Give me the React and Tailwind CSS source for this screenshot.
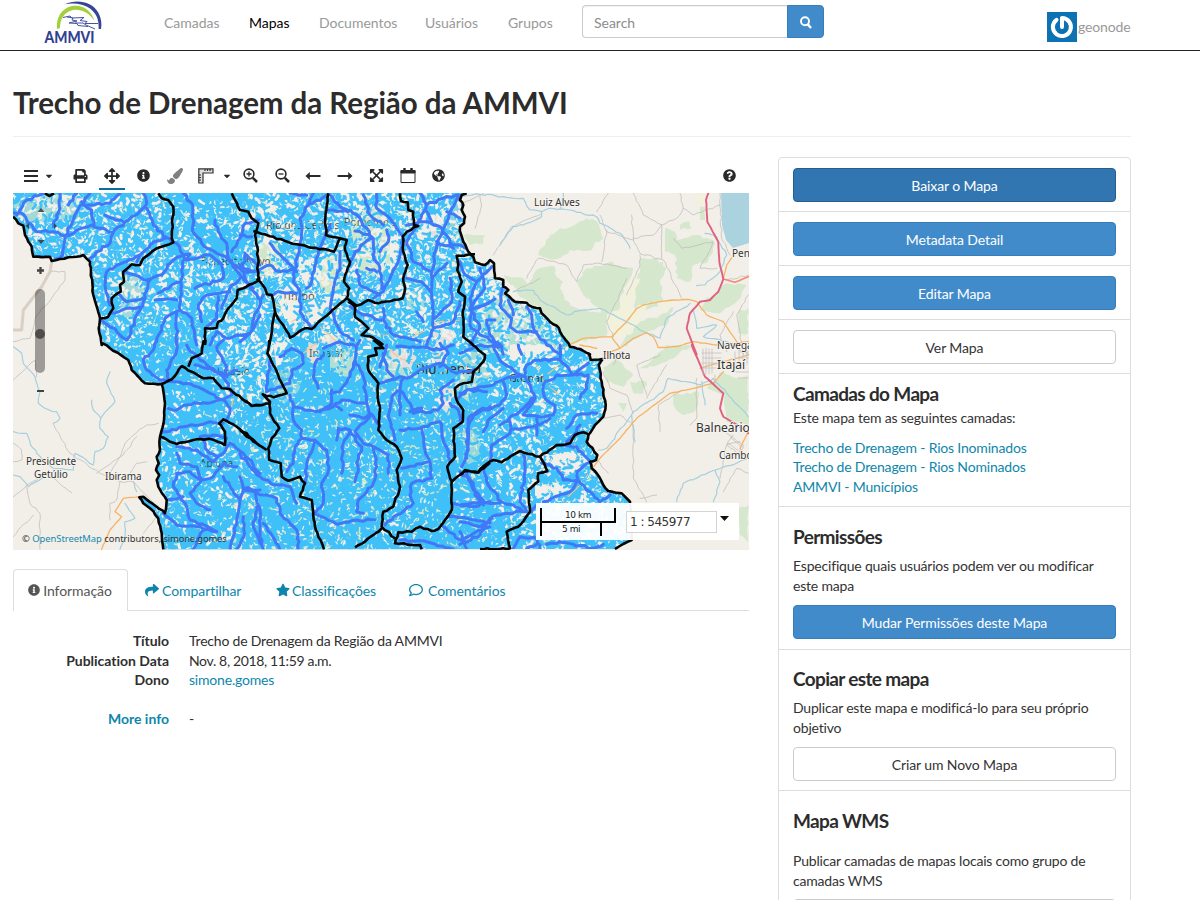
import React from "react";
import {
  FaPrint, FaArrowsAlt, FaInfoCircle, FaPaintBrush, FaQuestionCircle, FaGlobeAmericas,
  FaShare, FaStar, FaRegComment, FaCaretDown, FaExpandArrowsAlt,
} from "react-icons/fa";

const LATO = "font-['Lato','Open_Sans',sans-serif]";

/* Map tiles: every tile has an origin and holds lines drawn at three times the map scale. */
const TILES = { A: [10, 155], B: [240, 155], C: [10, 340], D: [240, 340], E: [460, 155], F: [460, 345] };
const pts = (tile, s) =>
  s.trim().split(/\s+/).map((p) => {
    const [x, y] = p.split(",").map(Number);
    return [TILES[tile][0] + x / 3, TILES[tile][1] + y / 3];
  });
const toPath = (list) => list.map(([x, y], i) => `${i ? "L" : "M"}${x.toFixed(1)} ${y.toFixed(1)}`).join("");

function makeRandom(seed) {
  let a = seed;
  return () => {
    a = (a + 0x6d2b79f5) | 0;
    let t = Math.imul(a ^ (a >>> 15), 1 | a);
    t = (t + Math.imul(t ^ (t >>> 7), 61 | t)) ^ t;
    return ((t ^ (t >>> 14)) >>> 0) / 4294967296;
  };
}

/* Adds small wiggles so that long segments read as surveyed lines. */
function roughPath(list, amp, seed) {
  const rnd = makeRandom(seed);
  const out = [list[0]];
  for (let i = 1; i < list.length; i++) {
    const [x0, y0] = list[i - 1];
    const [x1, y1] = list[i];
    const n = Math.max(1, Math.round(Math.hypot(x1 - x0, y1 - y0) / 4));
    for (let k = 1; k < n; k++) {
      out.push([x0 + ((x1 - x0) * k) / n + (rnd() - 0.5) * amp, y0 + ((y1 - y0) * k) / n + (rnd() - 0.5) * amp]);
    }
    out.push([x1, y1]);
  }
  return toPath(out);
}

const WEST = [
  ["A", "9,185 25,205 40,212 45,240 55,260 65,275 70,305 120,305 125,318 150,312 200,305 220,300 240,320 243,350 250,420 262,460 270,490 266,520 275,570"],
  ["C", "278,10 300,25 355,60 365,90 380,105 405,130 455,132 465,190 462,240 450,290 450,330 440,350 446,370 438,390 448,405 440,420 445,440 470,480 465,520 440,500 400,470 388,472 400,490 420,505 445,535 455,580 460,628"],
];
const EAST = [
  ["E", "20,115 5,120 0,135 10,150 5,165 15,185 12,205 0,215 2,235 10,260 25,290 40,305 45,322 75,330 90,315 102,325 105,370 130,375 130,395 145,405 135,415 165,440 200,443 215,455 240,460 245,475 270,500 290,512 300,530 312,548 330,575 360,582 390,598"],
  ["F", "385,25 392,45 428,42 416,60 425,110 437,180 430,215 405,240 385,270 380,290 412,330 408,345 390,350 395,370 410,385 425,410 445,438 485,445 510,470 515,585 490,597 465,612"],
];
const join = (segs) => segs.flatMap(([t, s]) => pts(t, s));
const REGION = toPath([[13, 192], ...join(WEST), ...join(EAST).slice().reverse(), [466, 192]]) + "Z";

const BORDERS = [
  ["A", "445,115 455,130 475,135 490,155 485,250 490,262 440,280 400,310 390,330 365,328 340,350 342,380 330,390 332,410 305,430 310,460 295,485 270,490"],
  ["A", "665,115 675,135 690,165 715,170 725,190 745,205 735,240 745,310 742,340 748,375 700,400 683,405 680,430 655,460 640,490 625,500 620,518 585,520 585,570"],
  ["A", "105,115 118,123 132,115"],
  ["C", "582,0 575,40 545,55 535,80"],
  ["B", "50,370 75,400 80,418 95,420 105,470 150,548 195,520 215,522 320,430 328,400 312,380 320,350 330,320 315,285 320,255 300,250 258,240 256,190 265,115"],
  ["B", "40,228 170,268 282,290 300,250"],
  ["B", "480,115 483,138 503,142 505,165 520,170 522,210 535,213 500,230 488,245 490,290 503,330 490,370 495,400 488,430 415,445 385,435 350,452 320,430"],
  ["B", "325,440 345,455 345,485 385,520 365,540 400,548 430,570"],
  ["B", "105,470 88,570"],
  ["D", "88,0 82,40 140,160 102,172 68,163 90,185 90,220 118,265 95,295 85,325 88,360 122,370 125,410 145,422 180,410 195,430 180,470 215,480 225,560 235,590 252,628"],
  ["B", "705,298 650,302 655,330 652,345 665,380 655,410 675,425 668,480 670,545 700,570"],
  ["D", "680,0 735,45 730,65 700,95 695,125 670,130 645,145 650,180 670,210 668,245 640,265 645,350 622,380 635,425 635,510 615,540 595,567 575,573 540,560 515,575 475,577 465,610 540,615 545,628"],
  ["D", "400,0 430,25 405,25 410,45 385,50 385,90 415,130 413,160 420,210 415,270 440,300 470,320 485,355 470,390 480,440 460,500 430,515 425,560 465,595"],
  ["D", "425,565 375,605 345,622"],
  ["D", "0,170 35,198 90,190"],
  ["D", "0,270 20,290 50,310 80,330"],
  ["C", "455,132 485,118 515,78 580,115 610,115 635,145 660,148 725,198 750,195"],
  ["C", "450,290 500,312 550,300 605,298 645,315 645,275 628,250 640,238 680,260 710,280 750,318"],
  ["D", "635,425 675,390 715,398 750,368"],
  ["F", "0,388 15,378 55,382 75,360 100,345 125,352 150,335 180,318 240,335 290,300 330,295 345,270 370,262 388,272"],
  ["F", "240,335 262,378 235,385 235,410 205,435 210,500 175,545 140,560 150,610 60,612"],
];

const RIVERS = [
  ["A", "9,172 40,178 80,230 130,230 165,243 245,210 310,232 345,200 400,160 410,145 400,115"],
  ["A", "20,180 50,135 100,115"], ["A", "165,243 158,300 135,312"], ["A", "150,115 150,160 130,215"],
  ["A", "200,115 175,150"], ["A", "165,243 200,170 225,130 240,115"], ["A", "215,140 245,165 252,210"],
  ["A", "285,180 310,190 340,200"], ["A", "310,232 300,265 260,290 240,310"], ["A", "220,150 300,145 330,115"],
  ["A", "410,160 430,210 470,248 500,265 520,300 540,298"], ["A", "470,248 430,262 390,300 350,320 290,350 285,390 300,450"],
  ["A", "520,300 490,315 455,360 410,375 345,350"], ["A", "520,115 548,150 548,230 575,265 620,295 660,315 690,360 745,430"],
  ["A", "615,195 625,230 650,265 655,310"], ["A", "745,195 705,205 690,250 665,290"], ["A", "540,298 530,315 600,300 635,330 640,370 555,400"],
  ["A", "522,300 515,370 510,465 465,490 440,560"], ["A", "510,465 545,490 560,570"], ["A", "510,380 445,415"],
  ["A", "500,435 435,435"], ["A", "420,375 400,440 350,555 275,495"], ["A", "395,455 350,460 300,475"],
  ["A", "330,420 350,440 400,430"], ["A", "690,370 660,400 635,460"], ["A", "660,410 590,420 565,450 575,500"],
  ["A", "625,425 620,490 590,515"], ["A", "750,480 720,535 650,550 620,530 600,570"], ["A", "500,470 500,570"],
  ["A", "745,350 700,350 650,310"], ["A", "705,295 700,340"], ["A", "390,300 380,320"],
  ["B", "0,340 40,350 90,330 120,350 165,345 185,230 180,190 205,150 220,115"], ["B", "205,150 260,120"],
  ["B", "165,345 160,380 180,410 180,470 215,520"], ["B", "90,265 130,310 170,350"], ["B", "270,210 235,290 215,380 200,400"],
  ["B", "270,120 310,160 350,180 400,250 400,300 420,340 425,400"], ["B", "265,165 325,170"], ["B", "370,120 390,180 430,210"],
  ["B", "345,228 395,245"], ["B", "395,250 345,290 330,330"], ["B", "440,225 445,260 420,290"], ["B", "490,250 470,330 430,410 400,430"],
  ["B", "350,345 360,390 420,420"], ["B", "380,340 410,350"], ["B", "410,115 410,160 450,190 485,240"],
  ["B", "300,290 300,330 280,400 270,460 300,530 340,555"], ["B", "70,420 50,470 30,535 0,560"], ["B", "90,420 120,410 170,415"],
  ["B", "540,115 560,150 610,130 650,120"], ["B", "560,150 530,210 500,260 520,320 575,350 575,420 580,520 560,570"],
  ["B", "655,120 620,200 590,270 575,350"], ["B", "500,210 560,200 600,215 640,270 700,280"], ["B", "620,170 660,190"],
  ["B", "590,260 640,280"], ["B", "500,370 545,380 572,410"], ["B", "620,325 575,370"], ["B", "630,370 635,440 585,490"],
  ["B", "330,455 370,480 430,495 460,540 540,560"], ["B", "430,460 430,495"], ["B", "530,470 550,500"], ["B", "580,520 640,500 660,440"],
  ["B", "720,340 735,400 690,460 720,520 690,570"], ["B", "750,440 690,465"], ["B", "0,240 35,245"], ["B", "0,330 20,380 40,400"],
  ["B", "560,170 575,200"], ["B", "20,300 60,330"], ["B", "150,115 200,120"],
  ["C", "440,0 430,30 400,60 410,90 450,120 530,130 600,160 640,180 665,165 640,100 555,75"], ["C", "500,0 500,30 470,90 475,120"],
  ["C", "530,15 570,60 640,110 680,90"], ["C", "475,205 500,210 530,195 640,180 660,205 650,240"], ["C", "450,280 520,260 600,245 640,250"],
  ["C", "640,0 620,20 650,80 650,110"], ["C", "500,320 560,330 610,365 640,340 660,310 700,340 750,400"], ["C", "570,290 610,285 650,295"],
  ["C", "500,340 510,370 560,380 575,420 540,460 560,490 600,510"], ["C", "575,420 610,410 640,370 680,380"],
  ["C", "500,400 490,440 510,470 530,500 540,540 620,575"], ["C", "500,400 540,395 575,420"], ["C", "460,520 500,555 560,560 620,575"],
  ["C", "475,480 520,470"], ["C", "640,410 660,440 690,480 680,540 660,628"], ["C", "750,450 700,445 690,480"],
  ["C", "700,530 700,590 680,628"], ["C", "580,570 560,610 550,628"], ["C", "580,300 590,330 620,350"], ["C", "740,500 730,560 750,610"],
  ["D", "0,340 30,380 60,410 105,435 150,440 170,490"], ["D", "0,410 10,450 70,465 110,475 120,520 170,570 175,628"],
  ["D", "40,450 60,510 60,580 70,628"], ["D", "70,550 105,600 120,628"], ["D", "120,50 155,25 185,40 190,70 155,90 150,130 80,155 90,60"],
  ["D", "250,45 225,70 220,110 235,145"], ["D", "150,165 160,200 230,215 280,200 305,180 380,190"], ["D", "345,60 330,110 300,155 275,160"],
  ["D", "275,150 275,190 240,215"], ["D", "345,60 370,110 380,190 390,230 345,275 370,310 400,320 445,345"],
  ["D", "160,200 160,240 185,270 185,295 165,320 160,370 140,395"], ["D", "185,295 225,300 260,330 265,395 245,430 250,490 225,520"],
  ["D", "225,300 200,370 195,430"], ["D", "290,300 295,265 330,270 310,310 305,400"], ["D", "330,270 365,320 350,370 355,395 345,425"],
  ["D", "400,320 410,380 400,430 355,480 350,515 370,520"], ["D", "220,520 290,553 350,540 405,540"], ["D", "445,345 445,400"],
  ["D", "330,225 370,235 390,220 420,260"], ["D", "305,210 290,200"], ["D", "250,25 300,5 350,20 360,0"], ["D", "345,60 350,20"],
  ["D", "420,130 480,110 500,115 540,90 600,70 650,100 700,90"], ["D", "430,40 440,90 460,110"], ["D", "440,15 420,80"],
  ["D", "490,115 480,150 510,190 520,220 595,210 610,190 600,150 640,120"], ["D", "480,150 455,170 445,230 465,300"],
  ["D", "480,270 540,265 600,245 610,300 630,360"], ["D", "545,265 555,330 570,365 485,385"], ["D", "570,365 570,400 575,415 515,430 510,465 520,490 435,555"],
  ["D", "480,160 480,225"], ["D", "510,215 545,205"], ["D", "630,190 655,210 660,240"], ["D", "750,200 710,215 685,260 685,330 665,380"],
  ["D", "655,175 680,150 740,155"], ["D", "640,490 700,500 750,485"], ["D", "680,400 700,450 730,480"], ["D", "630,530 680,535 750,550"],
  ["D", "610,560 660,600 750,560"], ["D", "480,600 560,605 640,628"], ["D", "470,20 520,20 600,30 640,15"], ["D", "600,80 625,40 600,10"],
  ["E", "0,320 15,360 50,380 95,335"], ["E", "50,380 30,430 35,470 30,510 60,540 120,570"], ["E", "35,465 105,432"], ["E", "125,400 120,450 155,490 150,515 170,530 230,530"],
  ["E", "200,455 215,480 225,530 260,570 300,598"], ["E", "80,495 90,540 125,575 130,598"], ["E", "145,435 160,480"], ["E", "80,495 105,495"], ["E", "0,595 60,570 125,575"], ["E", "175,570 185,598"],
  ["F", "100,0 130,55 190,95 200,60 230,45 300,45 300,0"], ["F", "300,45 340,90 385,55"], ["F", "195,95 210,120 225,160 190,210 240,215 280,210 285,180 255,160 250,120 290,90 340,90"],
  ["F", "0,145 60,125 100,120 150,95 195,95"], ["F", "130,110 140,150 120,180 60,200 25,220 20,340"], ["F", "120,240 190,190 225,155"],
  ["F", "320,250 350,210 410,205"], ["F", "90,345 95,300 150,265 150,230"], ["F", "70,370 80,410 125,470 200,500"], ["F", "190,330 195,380 180,470 200,500"],
  ["F", "0,480 60,470 120,475"], ["F", "0,380 40,415 45,450 70,480"], ["F", "150,255 220,245 270,220"], ["F", "230,215 230,270"],
  ["F", "245,355 290,370 310,405 355,405 390,440 420,470 450,450"], ["F", "300,300 350,305 390,350 350,380 355,405 330,440 250,470"],
  ["F", "0,530 60,545 110,510 190,500"], ["F", "160,610 180,575 230,580 240,610"], ["F", "215,500 230,480"], ["F", "0,598 60,570 90,520"],
  ["F", "350,90 385,90 380,130 360,160"], ["F", "260,598 300,590 400,610 430,598"], ["F", "0,560 20,612"], ["F", "70,260 90,220 130,190"], ["F", "360,240 340,270 320,290"], ["F", "230,598 200,612"],
];

const STREAMS = [
  ["C", "10,20 35,40 40,70 75,110 90,155 85,190 105,205 140,215 150,235 130,250"], ["C", "245,180 250,210 272,235 315,185 290,130 300,95"],
  ["C", "272,235 270,265 295,290 280,325 255,335 250,375 195,340 190,390"], ["C", "10,275 50,280 70,325 80,340 130,385 190,390"],
  ["C", "10,405 30,410 55,440 110,405"], ["C", "345,490 375,535 345,545 345,590 330,628"], ["C", "370,425 380,455"],
  ["E", "0,125 60,118 130,125 190,130 210,165 245,170 245,185 190,210 160,215 120,270"], ["E", "245,170 270,160 330,165 410,185 420,205 480,235 500,260 510,280"],
  ["E", "160,410 220,405 240,435 320,480 370,465 420,460 500,500 540,525 600,550 620,490 690,445"],
  ["E", "735,235 770,245 800,300 780,350 735,390 710,392"], ["E", "700,460 710,520 770,510 730,545 800,560 865,598"],
  ["E", "310,115 315,140 300,160"],
  ["F", "865,215 760,100 720,120 625,100 610,140 520,200 440,310 415,315"], ["F", "515,210 525,290"], ["F", "725,110 735,180"],
  ["F", "650,470 670,415 765,375 865,340"], ["F", "765,375 780,410 760,470"],
];
const MINOR = [
  ["A", "123,350 165,350 165,375 110,450 80,480 60,550 10,560"],
  ["C", "10,120 75,60 80,110"], ["C", "130,250 180,340 270,400 330,425 370,425 430,490"], ["C", "445,250 410,255 370,285 345,310 330,350 300,400"],
  ["C", "10,470 60,430 110,400 185,458"], ["C", "90,628 90,520 60,490 50,440"], ["C", "10,590 70,525"], ["C", "330,425 320,480 300,490 300,540"],
  ["C", "260,400 340,345 380,290"], ["C", "10,310 35,330 35,360 10,365"], ["C", "360,400 380,370 410,365"], ["C", "400,580 440,530"],
  ["E", "10,145 70,115"], ["E", "45,220 65,150 60,125"], ["E", "100,300 155,215 245,175"], ["E", "420,180 440,230 520,255 515,180"],
  ["E", "520,255 540,295 610,315 665,430"], ["E", "520,250 580,240 605,210 550,180 520,115"], ["E", "605,210 605,310"], ["E", "605,210 650,190 670,160 700,180 780,150"],
  ["E", "670,160 660,115"], ["E", "410,170 445,115"], ["E", "200,370 235,310 320,330 350,380 370,330 420,325 500,340"], ["E", "440,225 425,320"],
  ["E", "640,250 665,280 760,260 720,340 770,340"], ["E", "500,370 470,440 440,500 460,545"], ["E", "160,410 240,370"], ["E", "780,115 785,250 810,300"],
  ["E", "865,420 830,480 850,598"], ["E", "865,360 800,375"], ["E", "820,470 780,540 800,590"], ["E", "540,300 540,330 500,420"],
  ["F", "430,80 450,130 500,150 520,205"], ["F", "460,60 480,20"], ["F", "430,220 480,210 520,240 520,400 560,470"], ["F", "600,260 595,180 660,140"],
  ["F", "840,290 800,300 780,400"], ["F", "410,345 445,385"], ["F", "710,100 710,220 690,240"], ["F", "540,460 590,450"], ["F", "560,150 530,60 600,30"],
  ["F", "800,265 850,300 840,330 800,300 820,270"], ["F", "865,385 830,370 790,440"], ["F", "560,160 620,60"],
];
const ORANGE = [
  ["C", "275,628 300,570 335,530 315,515 340,475 390,470"], ["E", "310,578 370,550 455,545 500,500 530,460 550,450 600,440 640,435 685,433 710,440 740,480 790,500 830,560"],
  ["E", "455,545 480,580 520,550 560,533 580,545 595,578 650,575 700,560 770,570 865,560"], ["E", "790,370 800,330 830,290"], ["E", "430,598 480,580"],
  ["F", "310,470 360,420 420,340 480,280 530,220 630,145 700,130 760,115 790,80"], ["F", "720,70 790,50 865,30"], ["F", "865,260 840,310 850,330"],
  ["F", "260,90 310,50 330,70"], ["F", "340,270 350,330"], ["B", "155,500 210,475"], ["B", "430,540 520,545 600,500 660,495"], ["B", "240,515 290,560"],
  ["D", "190,40 240,0"], ["D", "450,30 480,55 560,80"], ["D", "555,0 590,40 620,70"], ["F", "230,60 250,110 300,150"], ["C", "650,165 670,170 665,200"],
  ["F", "300,380 350,340 370,300"], ["F", "360,0 410,10"],
];
const GREENS = [
  ["E", "235,300 270,240 300,220 340,212 380,190 410,198 430,250 405,262 395,285 330,285 300,310 260,310"],
  ["E", "205,390 225,350 240,340 285,335 290,365 310,380 300,400 330,450 400,470 440,480 440,540 330,570 250,470 190,430 130,360 190,370"],
  ["E", "350,380 380,340 450,320 480,332 520,340 510,370 490,400 470,490 430,480 400,450 370,420"],
  ["E", "540,310 590,310 620,340 600,375 605,410 610,450 520,470 530,420 500,430 540,350"], ["E", "615,220 645,230 650,255 720,240 765,265 745,320 700,330 690,380 650,370 645,300 615,290"],
  ["E", "500,540 520,510 560,490 590,490 640,455 620,510 540,540 500,575 480,575"], ["E", "735,440 800,385 860,390 830,440 780,475 720,465"], ["E", "10,240 75,240 70,265 30,270"],
  ["E", "660,210 690,200 695,220 660,225"], ["E", "720,155 735,155 735,195 720,195"], ["E", "835,470 865,460 865,535 835,535"], ["E", "590,598 620,575 660,585 640,598"],
  ["F", "540,70 600,20 620,0 700,0 620,50 560,70"], ["F", "430,65 470,45 520,90 500,110 490,125 440,110"], ["F", "510,110 560,110 550,145 520,145"],
  ["F", "640,150 715,140 710,190 670,210 640,180"], ["F", "740,130 790,80 830,100 865,90 865,240 800,230 790,150"], ["F", "475,175 500,175 490,200"],
  ["F", "835,490 865,480 865,590 840,570"],
];
const YELLOWS = [["E", "440,480 480,460 500,390 540,370 510,460 570,440 510,540 450,550"], ["E", "705,120 735,115 735,150 710,150"], ["E", "590,440 640,430 600,470"]];

const IN_GREEN = [
  ["A", "9,150 60,130 130,120 210,130 200,200 120,190 60,200 20,190", 0.7], ["A", "340,360 390,360 410,400 360,500 330,470", 0.7],
  ["B", "50,240 100,250 130,300 100,380 60,360", 1], ["B", "260,290 310,270 300,400 250,420 230,370", 1], ["B", "325,180 420,150 470,220 480,300 410,370 350,350 340,260", 1],
  ["B", "650,115 670,200 660,280 600,210", 0.5], ["B", "500,400 560,440 540,480 500,470", 0.6],
  ["D", "440,10 480,60 500,110 430,120", 0.8], ["D", "100,130 150,60 180,150 130,190", 0.5], ["D", "270,30 360,30 330,110 270,100", 0.8], ["D", "640,150 690,120 690,190", 0.8],
  ["E", "60,490 110,420 200,450 270,540 300,590 100,598 40,540", 0.8], ["F", "0,20 60,20 90,100 30,130 0,110", 0.7], ["F", "10,250 60,270 60,350 10,360", 0.6],
];
const OPEN_LAND = [
  ["B", "150,380 170,400 190,480 160,520 130,480 110,430"], ["B", "200,390 230,410 300,420 260,470 215,510 190,450"], ["B", "60,230 110,245 100,275 65,260"],
  ["B", "175,300 215,320 205,380 180,380"], ["B", "450,260 475,230 475,300 450,350"], ["B", "525,190 560,170 600,190 570,260 530,250"],
  ["D", "100,10 145,0 135,40 110,90"], ["F", "150,0 280,0 290,30 220,35 190,70 150,40"], ["F", "255,340 340,310 375,350 330,390 280,360"], ["F", "225,420 300,410 340,430 290,460 225,465"],
  ["E", "85,350 105,340 110,390 80,400"],
];
const TOWNS = [
  ["B", "250,545 290,530 330,560 300,570 240,570"], ["B", "570,520 610,500 650,540 640,570 590,570"], ["B", "560,200 590,180 610,240 580,260"],
  ["D", "450,30 500,20 530,50 520,80 460,90"], ["D", "570,10 620,10 620,70 570,60"], ["D", "610,130 660,120 620,220 600,200"], ["D", "200,10 250,10 230,80 200,60"],
];

/* Dense network of unnamed streams, as short flecks of open ground between them. */
function buildFlecks() {
  const rnd = makeRandom(20181108);
  const land = [], fine = [], green = [], twigs = [];
  const angle = (x, y) => Math.sin(x / 27 + y / 41) * 1.7 + Math.cos(y / 23 - x / 53) * 1.5;
  const stroke = (x, y, len, a) => {
    const bend = (rnd() - 0.5) * 2.6;
    const mx = x + Math.cos(a) * len * 0.5, my = y + Math.sin(a) * len * 0.5;
    return `M${x.toFixed(1)} ${y.toFixed(1)}L${mx.toFixed(1)} ${my.toFixed(1)}L${(mx + Math.cos(a + bend) * len * 0.5).toFixed(1)} ${(my + Math.sin(a + bend) * len * 0.5).toFixed(1)}`;
  };
  for (let y = 194; y < 549; y += 5) {
    for (let x = 13; x < 640; x += 5) {
      const px = x + rnd() * 5, py = y + rnd() * 5;
      const solid = py > 365 && px < 480;
      const open = px > 215 && px < 270 && py > 320 && py < 400 ? 0.8 : py < 340 ? (px > 245 ? 0.7 : px > 165 && py < 260 ? 0.25 : 0.5) : px > 490 ? 0.42 : px > 250 && solid ? 0.05 : 0.2;
      const a = angle(px, py) + (rnd() - 0.5) * 2;
      if (rnd() < open) land.push(stroke(px, py, 2 + rnd() * 5, a));
      if (rnd() < (solid ? 0.32 : 0.4)) fine.push(stroke(px + rnd() * 3, py + rnd() * 3, 1 + rnd() * 3.5, a + rnd() * 2));
      if (rnd() < (solid && px > 230 ? 0.42 : 0.1)) green.push(stroke(px, py, 1.5 + rnd() * 4.5, a + 1));
      if (rnd() < 0.42) twigs.push(stroke(px, py, 4 + rnd() * 6, a + rnd()));
    }
  }
  return { land: land.join(""), fine: fine.join(""), green: green.join(""), twigs: twigs.join("") };
}
const FLECKS = buildFlecks();
const group = (segs, amp, seed = 7) => segs.map(([t, s], i) => roughPath(pts(t, s), amp, seed + i)).join("");
const areas = (segs) => segs.map(([t, s], i) => roughPath(pts(t, s), 3.2, 90 + i) + "Z").join("");

const LABELS = [
  ["Luiz Alves", 534, 206, 10], ["Pen", 732, 257, 10], ["Navega", 717, 349, 10], ["Itajaí", 717, 369, 12], ["Ilhota", 603, 359, 10],
  ["Balneário", 696, 432, 12], ["Cambor", 719, 459, 10], ["Presidente", 26, 465, 10], ["Getúlio", 34, 478, 10], ["Ibirama", 105, 480, 10],
];
const COVERED = [
  ["Rio dos Cedros", 266, 229, 10.5], ["Pomerode", 344, 226, 10.5], ["Benedito Novo", 201, 265, 10], ["Timbó", 282, 300, 11], ["Indaial", 309, 357, 10.5], ["Rodeio", 217, 375, 10], ["Apiúna", 200, 467, 10],
];

function MapDrawing() {
  return (
    <svg className="block h-[357px] w-[736px]" viewBox="13 193 736 357">
      <defs><clipPath id="basin"><path d={REGION} /></clipPath></defs>
      <rect x="13" y="193" width="736" height="357" fill="#f2efe9" />
      <path d={areas(GREENS)} fill="#d5e7cc" />
      <path d={areas(YELLOWS)} fill="#f1f1dc" />
      <path d="M721 193L722 225L726 240L733 248L749 243V193Z" fill="#aad3df" />
      <g fill="none" strokeLinejoin="round" strokeLinecap="round">
        <path d={group(MINOR, 1.6)} stroke="#bdbbbb" strokeWidth=".75" />
        <path d={group(STREAMS, 1.8)} stroke="#a6cfdf" strokeWidth="1.2" />
        <path d={group([["A", "125,320 120,350 95,395 40,465 35,525 9,525"]], 0)} stroke="#d9cfc3" strokeWidth="3" />
        <path d={group(ORANGE, 0.5)} stroke="#f5b366" strokeWidth="1.3" />
        <path d={group([["E", "790,372 825,382 865,365"]], 0)} stroke="#f48b6e" strokeWidth="1.6" />
        <path d={group([["E", "745,115 738,135 742,200 775,260 778,320 790,372 775,410 750,435 720,440 690,475 680,520 710,598"], ["F", "695,0 735,95 790,145 780,190 790,215 840,245 865,265"]], 0.4)} stroke="#e0607f" strokeWidth="1.9" />
        <path d="M703 349v26M706 348v26M709 349v25M712 349v24M715 375v8M735 352v12M739 350v12M743 350v12M747 352v12M702 353h19M703 358h18M702 363h14M704 368h12M736 372h13M738 378h11M740 352h9M740 358h9M730 437l12 10M728 443l12 9" stroke="#c5c2c0" strokeWidth=".8" />
      </g>
      <g clipPath="url(#basin)">
        <rect x="13" y="193" width="630" height="357" fill="#3fc0f8" />
        <g fill="none" strokeLinejoin="round" strokeLinecap="round">
          {IN_GREEN.map(([t, s, o], i) => <path key={i} d={roughPath(pts(t, s), 4, 20 + i) + "Z"} fill="#cfe6cb" opacity={o} />)}
          <path d={areas(OPEN_LAND)} fill="#f2efe9" />
          <path d={areas(TOWNS)} fill="#e3dfdc" />
          <path d={FLECKS.land} stroke="#f2efe9" strokeWidth="2.9" />
          <path d={FLECKS.green} stroke="#cde6c4" strokeWidth="1.5" />
          <path d={group(ORANGE, 0.5)} stroke="#f7c58b" strokeWidth="1.2" />
        </g>
        <g fontFamily="'Noto Sans', sans-serif" fill="#333">
          {COVERED.map(([t, x, y, s]) => <text key={t} x={x} y={y} fontSize={s} opacity=".8">{t}</text>)}
          <text x="416" y="374" fontSize="13.5">Blumenau</text>
          <text x="509" y="382" fontSize="10.5">Gaspar</text>
        </g>
        <g fill="none" strokeLinejoin="round" strokeLinecap="round">
          <path d={FLECKS.twigs} stroke="#3fc0f8" strokeWidth="2.500" />
          <path d={FLECKS.fine} stroke="#eaf1ec" strokeWidth="1.200" />
        </g>
        <path d={group(RIVERS, 2.4, 31)} fill="none" stroke="#3f79f7" strokeWidth="3" strokeLinejoin="round" strokeLinecap="round" />
      </g>
      <g fill="none" stroke="#050505" strokeWidth="2.6" strokeLinejoin="round">
        <path d={group(BORDERS, 1.4, 60)} />
        <path d={roughPath(join(WEST), 1.2, 3)} />
        <path d={roughPath(join(EAST), 1.2, 4)} />
      </g>
      <g fontFamily="'Noto Sans', sans-serif" fill="#333" stroke="#f7f4ef" strokeWidth="1.6" paintOrder="stroke">
        {LABELS.map(([t, x, y, s]) => <text key={t} x={x} y={y} fontSize={s}>{t}</text>)}
      </g>
    </svg>
  );
}

function Logo() {
  return (
    <svg className="block h-[46px] w-[60px]" viewBox="43 0 60 46">
      <path d="M65 4.300C76-1 92 1 98.500 13C101 18 102 23 101 29L98.600 29C99 20 97 14 90 8.500C83 3.500 73 2.500 65 4.300Z" fill="#36459a" />
      <path d="M57 29C56 18 61 9 71 6.300C82 4 91 10 94.500 21C89 12.500 81 9 73 10C64 12 60 19 60 28Z" fill="#a3cf3b" />
      <path d="M63 17.500l7-1.500 2 2 12-.5-4 3 7 1-2 2h13M67 17l6 1-1 2 5 1-8 2 8 .5 1 2 10 1M75 23h8l3 2 9 4" fill="none" stroke="#4454a2" strokeWidth="1" />
      <text x="44.500" y="43" fontFamily="Lato, sans-serif" fontWeight="900" fontSize="16" textLength="50" lengthAdjust="spacingAndGlyphs" fill="#323f92">AMMVI</text>
    </svg>
  );
}

const Zoom = ({ plus }) => (
  <svg className="h-[15px] w-[15px]" viewBox="0 0 15 15" fill="none" stroke="#2a2a2a" strokeWidth="1.6">
    <circle cx="6" cy="6" r="4.900" /><path d="M9.800 9.800L14 14" strokeWidth="2.500" />
    <path d={plus ? "M3.500 6h5M6 3.500v5" : "M3.500 6h5"} strokeWidth="1.300" />
  </svg>
);
const LongArrow = ({ left }) => (
  <svg className={left ? "h-2.5 w-4" : "h-2.5 w-4 rotate-180"} viewBox="0 0 16 10"><path d="M.500 5L4.800 1V4.100H15.500V5.900H4.800V9Z" fill="#2a2a2a" /></svg>
);
const Caret = () => <FaCaretDown className="h-2.5 w-2.5" />;

function Toolbar() {
  const slot = "flex w-[31.4px] items-center justify-center";
  return (
    <div className="flex h-[37px] items-stretch pt-0.5 text-[#2a2a2a]">
      <div className="flex w-[52px] items-center pl-[11px]">
        <svg className="h-3 w-[14px]" viewBox="0 0 14 12" stroke="#2a2a2a" strokeWidth="2"><path d="M0 1h14M0 6h14M0 11h14" /></svg>
        <span className="ml-[6px]"><Caret /></span>
      </div>
      <div className={slot}><FaPrint className="h-[14px] w-[15px]" /></div>
      <div className="relative flex w-[31.4px] items-center justify-center">
        <FaArrowsAlt className="h-4 w-4" />
        <span className="absolute inset-x-[3px] bottom-[3px] h-[2px] bg-[#0d6aa8]" />
      </div>
      <div className={slot}><FaInfoCircle className="h-[13px] w-[13px]" /></div>
      <div className={slot}><FaPaintBrush className="h-4 w-4 text-[#808080]" /></div>
      <div className={slot}>
        <svg className="h-4 w-4" viewBox="0 0 16 16" fill="#ddd" stroke="#333" strokeWidth="1.200"><path d="M.8 .8H15V5H5V15H.8Z" /><path d="M7 1v2M9.500 1v2M12 1v2M1 7h2M1 9.500h2M1 12h2" /></svg>
      </div>
      <div className="flex w-[13px] items-center"><Caret /></div>
      <div className={slot}><Zoom plus /></div>
      <div className={slot}><Zoom /></div>
      <div className={slot}><LongArrow left /></div>
      <div className={slot}><LongArrow /></div>
      <div className={slot}><FaExpandArrowsAlt className="h-[15px] w-[15px]" /></div>
      <div className={slot}>
        <svg className="h-[17px] w-4" viewBox="0 0 16 17" fill="none" stroke="#2a2a2a" strokeWidth="1"><path d="M1 3.500V15.500H15V3.500Z" /><path d="M1 3.500H15V6H1Z" fill="#2a2a2a" /><path d="M4.500 1v4M11.500 1v4" strokeWidth="2.400" /></svg>
      </div>
      <div className={slot}><FaGlobeAmericas className="h-[13px] w-[13px]" /></div>
      <div className="ml-auto flex items-center pr-[13px]"><FaQuestionCircle className="h-[13px] w-[13px]" /></div>
    </div>
  );
}

function MapPanel() {
  return (
    <div className="relative h-[357px] overflow-hidden">
      <MapDrawing />
      <svg className="absolute left-[12px] top-[14px] h-[37px] w-[32px] opacity-80" viewBox="0 0 32 37" fill="#333"><path d="M12.500 5L16 1L19.500 5ZM12.500 33H19.500L16 37ZM4 16V22L0.500 19ZM29 16V22L32 19Z" /></svg>
      <svg className="absolute left-[24px] top-[74px] h-[7px] w-[7px]" viewBox="0 0 8 8" stroke="#444" strokeWidth="2.600"><path d="M0 4h8M4 0v8" /></svg>
      <div className="absolute left-[22px] top-[96px] h-[84px] w-[10px] rounded-full bg-black/35" />
      <div className="absolute left-[22px] top-[136px] h-[10px] w-[10px] rounded-full bg-black/50" />
      <div className="absolute left-[24px] top-[197px] h-[2px] w-[7px] bg-[#444]" />
      <div className="absolute bottom-[4px] left-[9px] whitespace-nowrap font-['Noto_Sans',sans-serif] text-[9.4px] leading-[14px] text-[#333] tracking-[-0.02px]">
        © <span className="text-[#1588ad]">OpenStreetMap</span> contributors,<span className="tracking-[-0.15px]"> simone.gomes</span>
      </div>
      <div className="absolute left-[523px] top-[310px] flex h-[37px] w-[203px] items-center bg-white/95">
        <div className="ml-[4px] w-[76px] font-['DejaVu_Sans',sans-serif] text-[9px] tracking-[-0.45px] text-[#222]">
          <div className="h-[15px] border-x-2 border-b-2 border-black text-center leading-[15px]">10 km</div>
          <div className="h-[13px] w-[62px] border-x-2 border-black text-center leading-[13px]">5 mi</div>
        </div>
        <div className="ml-[10px] h-[22px] w-[91px] border border-[#d4d4d4] bg-white pl-[3px] font-['DejaVu_Sans',sans-serif] text-[12px] leading-[21px] tracking-[-0.5px] text-[#333]">1 : 545977</div>
        <svg className="mb-[7px] ml-[3px] h-[5px] w-[9px]" viewBox="0 0 9 5"><path d="M0 0H9L4.500 5Z" fill="#111" /></svg>
      </div>
    </div>
  );
}

const Button = ({ kind = "primary", children }) => {
  const look = {
    active: "border-[#285e8e] bg-[#3276b1] text-white",
    primary: "border-[#357ebd] bg-[#428bca] text-white",
    plain: "border-[#ccc] bg-white text-[#333]",
  }[kind];
  return <button className={`block h-[34px] w-full rounded-[4px] border pt-px text-center text-[14px] leading-[32px] tracking-[-0.1px] ${look}`}>{children}</button>;
};

function Sidebar() {
  const item = "border-t border-[#ddd] px-[14px]";
  const title = "text-[19px] font-bold leading-[22px] tracking-[-0.65px] text-[#2c2c2c]";
  return (
    <aside className="h-[760px] w-[353px] overflow-hidden rounded-t-[4px] border border-[#ddd] text-[14px] leading-[19.7px] tracking-[-0.19px] text-[#333]">
      <div className="h-[53px] px-[14px] pt-[10px]"><Button kind="active">Baixar o Mapa</Button></div>
      <div className={`h-[54px] pt-[10px] ${item}`}><Button>Metadata Detail</Button></div>
      <div className={`h-[54px] pt-[10px] ${item}`}><Button>Editar Mapa</Button></div>
      <div className={`h-[54px] pt-[10px] ${item}`}><Button kind="plain">Ver Mapa</Button></div>
      <div className={`h-[133px] pt-[9px] ${item}`}>
        <h3 className={title}>Camadas do Mapa</h3>
        <p className="mt-[3px]">Este mapa tem as seguintes camadas:</p>
        <ul className="mt-[10px] text-[#0e86ab]"><li>Trecho de Drenagem - Rios Inominados</li><li>Trecho de Drenagem - Rios Nominados</li><li>AMMVI - Municípios</li></ul>
      </div>
      <div className={`h-[143px] pt-[19px] ${item}`}>
        <h3 className={title}>Permissões</h3>
        <p className="mb-[10px] mt-[8px]">Especifique quais usuários podem ver ou modificar<br />este mapa</p>
        <Button>Mudar Permissões deste Mapa</Button>
      </div>
      <div className={`h-[141px] pt-[18px] ${item}`}>
        <h3 className={title}>Copiar este mapa</h3>
        <p className="mb-[10px] mt-[8px]">Duplicar este mapa e modificá-lo para seu próprio<br />objetivo</p>
        <Button kind="plain">Criar um Novo Mapa</Button>
      </div>
      <div className={`h-[160px] pt-[19px] ${item}`}>
        <h3 className={title}>Mapa WMS</h3>
        <p className="mb-[9px] mt-[19px]">Publicar camadas de mapas locais como grupo de<br />camadas WMS</p>
        <Button kind="plain" />
      </div>
    </aside>
  );
}

function Header() {
  return (
    <header className="flex h-[51px] items-start border-b border-[#222] text-[14px] tracking-[-0.02px] text-[#999]">
      <div className="ml-[43px]"><Logo /></div>
      <nav className="ml-[61px] flex pt-[13px] leading-5">
        <span className="w-[85px]">Camadas</span>
        <span className="w-[70px] text-black">Mapas</span>
        <span className="w-[106px]">Documentos</span>
        <span className="w-[83px]">Usuários</span>
        <span className="w-[74px]">Grupos</span>
      </nav>
      <div className="mt-[5px] flex h-[33px]">
        <div className="w-[205px] rounded-l-[4px] border border-r-0 border-[#ccc] pl-[11px] leading-[34px] text-[#8c8c8c] shadow-[inset_0_1px_1px_rgba(0,0,0,0.06)]">Search</div>
        <div className="flex w-[37px] items-center justify-center rounded-r-[4px] border border-[#357ebd] bg-[#428bca]">
          <svg className="mt-0.5 h-[13px] w-[12px]" viewBox="0 0 12 13" fill="none" stroke="#fff" strokeWidth="1.900"><circle cx="5" cy="5.300" r="4" /><path d="M7.800 8.400L11 12" strokeWidth="2.400" /></svg>
        </div>
      </div>
      <div className="ml-[223px] mt-[12px] flex">
        <svg className="h-[30px] w-[30px]" viewBox="0 0 30 30"><rect width="30" height="30" fill="#0c72b4" /><path d="M9.500 7.800A9 9 0 1 0 15 6V15" fill="none" stroke="#fff" strokeWidth="4" strokeLinecap="round" strokeLinejoin="round" /></svg>
        <span className="ml-px leading-[30px] tracking-[-0.15px]">geonode</span>
      </div>
    </header>
  );
}

function Tabs() {
  return (
    <div className="mt-[19px] flex h-[42px] items-stretch text-[14px] tracking-[-0.06px] text-[#0e86ab]">
      <div className="flex w-[115px] items-center justify-center gap-[3px] rounded-t-[4px] border border-b-0 border-[#ddd] pb-px pr-px text-[#555]"><FaInfoCircle className="h-3 w-3" />Informação</div>
      <div className="flex flex-1 items-center border-b border-[#ddd] pl-[17px] pt-px">
        <span className="flex w-[131px] items-center gap-[3px]"><FaShare className="h-[14px] w-[14px]" />Compartilhar</span>
        <span className="flex w-[133px] items-center gap-[2px]"><FaStar className="h-[14px] w-[14px]" />Classificações</span>
        <span className="flex items-center gap-[5px]"><FaRegComment className="h-[14px] w-[14px]" />Comentários</span>
      </div>
    </div>
  );
}

function Details() {
  const term = "w-[156px] text-right font-bold tracking-[-0.02px]";
  return (
    <dl className="mt-[20px] text-[14px] leading-[19.7px] tracking-[-0.2px] text-[#2f2f2f]">
      <div className="flex gap-5"><dt className={term}>Título</dt><dd>Trecho de Drenagem da Região da AMMVI</dd></div>
      <div className="flex gap-5"><dt className={term}>Publication Data</dt><dd className="tracking-[-0.35px]">Nov. 8, 2018, 11:59 a.m.</dd></div>
      <div className="flex gap-5"><dt className={term}>Dono</dt><dd className="text-[#0e86ab]">simone.gomes</dd></div>
      <div className="mt-[19px] flex gap-5"><dt className={`${term} text-[#0e86ab]`}>More info</dt><dd>-</dd></div>
    </dl>
  );
}

export default function App() {
  return (
    <div className={`h-[900px] w-[1200px] overflow-hidden bg-white ${LATO}`}>
      <Header />
      <main className="ml-[12px] w-[1119px]">
        <div className="ml-px h-[86px] border-b border-[#eee] pt-[34px]">
          <h1 className="whitespace-nowrap text-[29.5px] font-bold leading-9 tracking-[-0.06px] text-[#2c2c2c]">Trecho de Drenagem da Região da AMMVI</h1>
        </div>
        <div className="flex pt-[19px]">
          <section className="w-[737px] shrink-0 pl-px">
            <Toolbar />
            <MapPanel />
            <Tabs />
            <Details />
          </section>
          <div className="ml-[29px] mt-px shrink-0"><Sidebar /></div>
        </div>
      </main>
    </div>
  );
}
